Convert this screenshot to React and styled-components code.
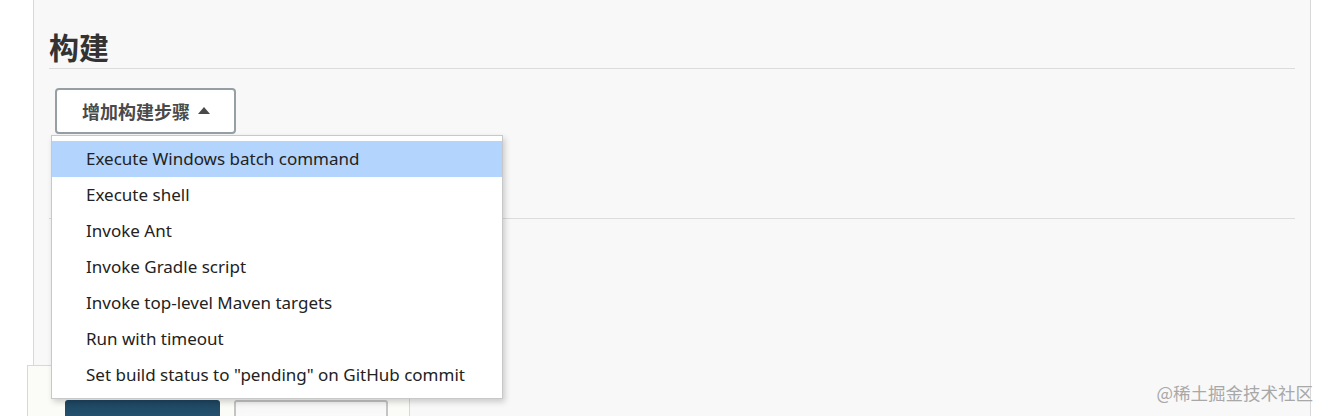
import React from 'react'
import styled, { createGlobalStyle } from 'styled-components'

const GlobalStyle = createGlobalStyle`
  html, body {
    margin: 0;
    padding: 0;
    background: #ffffff;
    font-family: "Noto Sans", "Noto Sans CJK SC", sans-serif;
    color: #333;
  }
  #root {
    height: 416px;
    overflow: hidden;
  }
`

const steps = [
  'Execute Windows batch command',
  'Execute shell',
  'Invoke Ant',
  'Invoke Gradle script',
  'Invoke top-level Maven targets',
  'Run with timeout',
  'Set build status to "pending" on GitHub commit',
]

export default function App() {
  return (
    <Page>
      <GlobalStyle />
      <Panel>
        <Section>
          <Heading>构建</Heading>
          <AddArea>
            <AddButton>
              增加构建步骤
              <Caret />
            </AddButton>
            <Menu>
              {steps.map((step, i) => (
                <MenuItem key={step} active={i === 0}>
                  {step}
                </MenuItem>
              ))}
            </Menu>
          </AddArea>
        </Section>
        <Divider />
      </Panel>

      <BottomBar>
        <SaveButton />
        <ApplyButton />
      </BottomBar>

      <Watermark>@稀土掘金技术社区</Watermark>
    </Page>
  )
}

const Page = styled.div`
  position: relative;
  height: 416px;
  padding-left: 33px;
  overflow: hidden;
`

const Panel = styled.div`
  width: 1278px;
  height: 416px;
  background: #f8f8f8;
  border-left: 1px solid #d8d8d8;
  border-right: 1px solid #d8d8d8;
  padding: 0 15px;
  box-sizing: border-box;
`

const Section = styled.div`
  padding-top: 26px;
`

const Heading = styled.h2`
  margin: 0;
  font-family: "Noto Sans CJK SC", sans-serif;
  font-size: 30px;
  font-weight: 700;
  line-height: 40px;
  color: #333;
  padding-bottom: 2px;
  border-bottom: 1px solid #dcdcdc;
`

const AddArea = styled.div`
  position: relative;
  padding: 19px 0 0 6px;
  height: 130px;
`

const AddButton = styled.div`
  display: inline-flex;
  align-items: center;
  gap: 8px;
  box-sizing: border-box;
  width: 181px;
  height: 46px;
  padding-left: 25px;
  border: 2px solid #969fa3;
  border-radius: 4px;
  background: #ffffff;
  font-family: "Noto Sans CJK SC", sans-serif;
  font-size: 18px;
  font-weight: 700;
  color: #4a4a4a;
`

const Caret = styled.span`
  width: 0;
  height: 0;
  border-left: 6px solid transparent;
  border-right: 6px solid transparent;
  border-bottom: 7px solid #4a4a4a;
  margin-bottom: 2px;
`

const Menu = styled.div`
  position: absolute;
  top: 66px;
  left: 2px;
  width: 450px;
  padding: 5px 0 5px;
  background: #ffffff;
  border: 1px solid #c8c8c8;
  box-shadow: 2px 3px 6px rgba(0, 0, 0, 0.18);
  z-index: 2;
`

const MenuItem = styled.div`
  height: 36px;
  line-height: 36px;
  padding-left: 34px;
  font-size: 17px;
  color: #222;
  white-space: nowrap;
  background: ${p => (p.active ? '#b3d4fd' : 'transparent')};
`

const Divider = styled.div`
  border-top: 1px solid #dcdcdc;
`

const BottomBar = styled.div`
  position: absolute;
  left: 27px;
  top: 365px;
  width: 383px;
  height: 60px;
  box-sizing: border-box;
  padding: 34px 0 0 37px;
  display: flex;
  gap: 14px;
  background: #fbfbf8;
  border: 1px solid #d8d8d8;
`

const SaveButton = styled.div`
  width: 155px;
  height: 40px;
  border-radius: 3px 3px 0 0;
  background: linear-gradient(#1d4560, #2f6283);
`

const ApplyButton = styled.div`
  width: 154px;
  height: 40px;
  box-sizing: border-box;
  border: 2px solid #c4c4c4;
  border-radius: 3px 3px 0 0;
  background: linear-gradient(#f6f6f6, #ffffff);
`

const Watermark = styled.div`
  position: absolute;
  right: 15px;
  top: 380px;
  font-family: "Noto Sans CJK SC", sans-serif;
  font-size: 17.5px;
  color: #a8a8a8;
  z-index: 3;
`
